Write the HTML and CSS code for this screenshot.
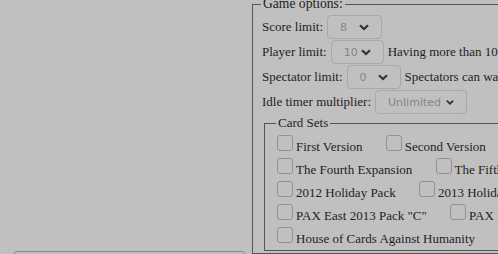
FILE: index.html
```html
<!DOCTYPE html>
<html lang="en">
<head>
  <meta charset="UTF-8" />
  <title>Game options</title>
  <link rel="stylesheet" href="styles.css">
</head>
<body>
  <div class="layout">
    <div class="side">
      <div class="chat-input"></div>
    </div>
    <fieldset class="options">
      <legend>Game options:</legend>
      <div class="row">
        <label>Score limit:</label>
        <div class="select sel-score"><span>8</span><svg viewBox="0 0 10 7" width="10" height="7"><path d="M1 1.2 L5 5 L9 1.2" fill="none" stroke="#333" stroke-width="2.2"/></svg></div>
      </div>
      <div class="row">
        <label>Player limit:</label>
        <div class="select sel-player"><span>10</span><svg viewBox="0 0 10 7" width="10" height="7"><path d="M1 1.2 L5 5 L9 1.2" fill="none" stroke="#333" stroke-width="2.2"/></svg></div>
        <span class="note">Having more than 10 players makes the game go slowly.</span>
      </div>
      <div class="row">
        <label>Spectator limit:</label>
        <div class="select sel-spec"><span>0</span><svg viewBox="0 0 10 7" width="10" height="7"><path d="M1 1.2 L5 5 L9 1.2" fill="none" stroke="#333" stroke-width="2.2"/></svg></div>
        <span class="note">Spectators can watch and chat, but not actually play.</span>
      </div>
      <div class="row">
        <label>Idle timer multiplier:</label>
        <div class="select sel-idle"><span>Unlimited</span><svg viewBox="0 0 10 7" width="10" height="7"><path d="M1 1.2 L5 5 L9 1.2" fill="none" stroke="#333" stroke-width="2.2"/></svg></div>
      </div>
      <fieldset class="card-sets">
        <legend>Card Sets</legend>
        <div class="set-row">
          <label class="set"><span class="box"></span>First Version</label>
          <label class="set"><span class="box"></span>Second Version</label>
          <label class="set"><span class="box"></span>Third Version</label>
        </div>
        <div class="set-row">
          <label class="set"><span class="box"></span>The Fourth Expansion</label>
          <label class="set"><span class="box"></span>The Fifth Expansion</label>
        </div>
        <div class="set-row">
          <label class="set"><span class="box"></span>2012 Holiday Pack</label>
          <label class="set"><span class="box"></span>2013 Holiday Pack</label>
        </div>
        <div class="set-row">
          <label class="set"><span class="box"></span>PAX East 2013 Pack "C"</label>
          <label class="set"><span class="box"></span>PAX Prime 2013 Pack</label>
        </div>
        <div class="set-row">
          <label class="set"><span class="box"></span>House of Cards Against Humanity</label>
        </div>
      </fieldset>
    </fieldset>
  </div>
</body>
</html>
```

FILE: styles.css
```css
html, body {
  margin: 0;
  height: 100%;
  overflow: hidden;
}
body {
  background: #c0c0c0;
  font-family: "Liberation Serif", serif;
  font-size: 13px;
  color: #1e1e1e;
}
.layout {
  display: flex;
  width: 900px;
  height: 254px;
}
.side {
  width: 252px;
  flex: none;
  padding: 251px 7px 0 14px;
  box-sizing: border-box;
}
.chat-input {
  height: 20px;
  border: 1px solid #8c8c8c;
  border-radius: 3px;
}
.options {
  flex: none;
  width: 600px;
  margin: -4px 0 0 0;
  padding: 3px 9px 0 9px;
  border: 1px solid #555;
  border-right: none;
}
.options > legend {
  padding: 0 2px;
  margin-left: -1px;
  font-size: 13.6px;
}
.row {
  display: flex;
  align-items: center;
  height: 24px;
  margin-bottom: 1px;
  white-space: nowrap;
}
.row label {
  margin-right: 4px;
}
.select {
  display: flex;
  align-items: center;
  box-sizing: border-box;
  height: 24px;
  padding: 0 12px;
  border: 1px solid #a8a8a8;
  border-radius: 4px;
  font-family: "DejaVu Sans", sans-serif;
  font-size: 11px;
  color: #858585;
}
.select svg {
  margin-left: auto;
}
.sel-score { width: 55px; }
.sel-player { width: 53px; }
.sel-spec { width: 54px; }
.sel-idle { width: 92px; }
.sel-idle span { margin-right: 5px; }
.note {
  margin-left: 4px;
}
.card-sets {
  margin: 1px 0 0 2px;
  padding: 4px 12px 0 12px;
  border: 1px solid #555;
  border-right: none;
}
.card-sets legend {
  padding: 0 2px;
  margin-left: -1px;
}
.set-row {
  height: 23px;
  white-space: nowrap;
}
.set {
  margin-right: 20px;
}
.box {
  display: inline-block;
  vertical-align: baseline;
  width: 16px;
  height: 16px;
  border: 1px solid #929292;
  border-radius: 3px;
  margin-right: 3px;
  box-sizing: border-box;
}
```
